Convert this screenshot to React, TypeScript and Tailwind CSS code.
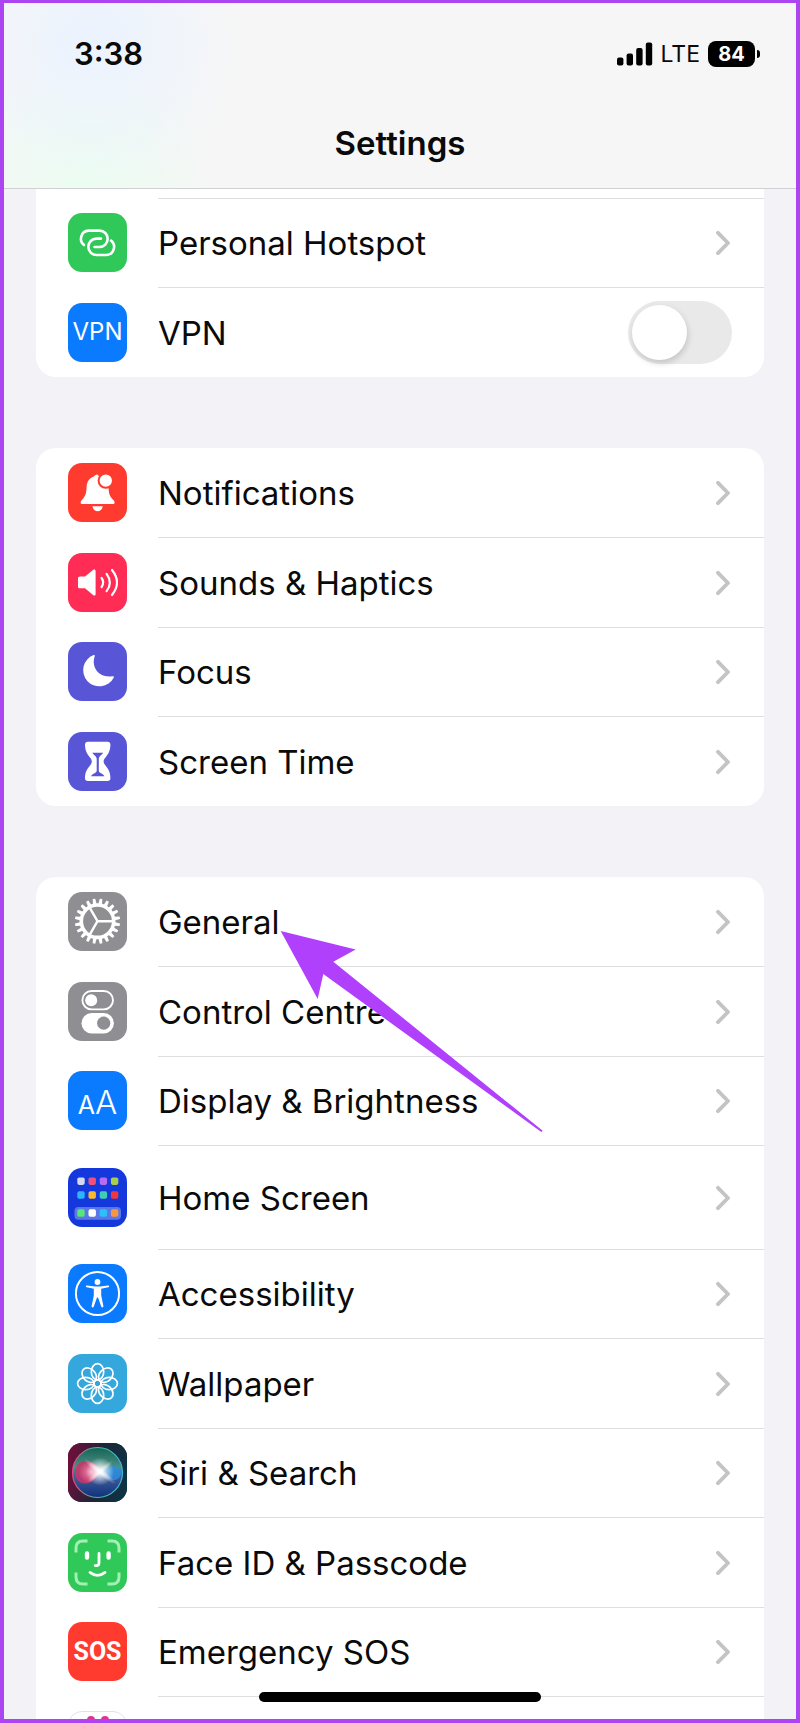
import React from "react";

const iconBox = "h-[59px] w-[59px] shrink-0 rounded-[14px] overflow-hidden flex items-center justify-center text-white";

const HotspotIcon = () => (
  <svg viewBox="0 0 59 59" className="h-full w-full" fill="none" stroke="currentColor" strokeWidth="2.6" strokeLinecap="round">
    <path d="M16 32 A8.1 8.1 0 0 1 20.5 17.6 H31.5 A8.2 8.2 0 0 1 31.5 34 H26.5" />
    <path d="M43 27.6 A8.1 8.1 0 0 1 38.5 42 H28.5 A8.2 8.2 0 0 1 28.5 25.6 H33" />
  </svg>
);

const BellIcon = () => (
  <svg viewBox="0 0 59 59" className="h-full w-full" fill="currentColor">
    <path d="M29.5 11.5 C27.5 11.5 26.5 12.5 26 13.5 C20.5 15.5 18.8 19.5 18.6 24 C18.4 30 17.5 33 14.5 36.2 C13 37.8 12.6 38.7 12.6 39.5 C12.6 40.6 13.4 41 14.6 41 H44.6 C45.8 41 46.6 40.6 46.6 39.5 C46.6 38.7 46.2 37.8 44.6 36.2 C41.5 33 40.8 30 40.6 25 Z" />
    <path d="M24.5 43.3 H34.7 C34.4 46.3 32.4 48.2 29.6 48.2 C26.8 48.2 24.8 46.3 24.5 43.3 Z" />
    <circle cx="37.8" cy="17.6" r="7.2" fill="currentColor" stroke="#ff3b30" strokeWidth="2" />
  </svg>
);

const SpeakerIcon = () => (
  <svg viewBox="0 0 59 59" className="h-full w-full" fill="none" stroke="currentColor" strokeWidth="2.2" strokeLinecap="round">
    <path d="M12 23.5 H17 L25 17 C26.4 16 27.6 16.6 27.6 18.2 V41 C27.6 42.6 26.4 43 25 42 L17 35.3 H12 C10.7 35.3 10 34.6 10 33.4 V25.4 C10 24.2 10.7 23.5 12 23.5 Z" fill="currentColor" stroke="none" />
    <path d="M33.6 25 Q36.8 29.5 33.6 34" />
    <path d="M38.6 20.8 Q45 29.5 38.6 38.2" />
    <path d="M44 17 Q54 29.5 44 42" />
  </svg>
);

const MoonIcon = () => (
  <svg viewBox="0 0 59 59" className="h-full w-full" fill="currentColor">
    <path d="M25.6 13 C26.3 12.7 27 13.2 26.7 14.2 C23 25 30.5 36 44.2 34.2 C45.6 34 46.2 34.6 45.7 35.7 A16.2 16.2 0 1 1 25.6 13 Z" />
  </svg>
);

const HourglassIcon = () => (
  <svg viewBox="0 0 59 59" className="h-full w-full">
    <path d="M20 9.8 H39.5 C41.5 9.8 42.4 11 42.4 12.6 C42.4 19 40 22.5 37.5 25.5 C35 28.4 35 30.6 37.5 33.5 C40 36.5 42.4 40 42.4 46.2 C42.4 48 41.5 49 39.5 49 H20 C18 49 17 48 17 46.2 C17 40 19.4 36.5 22 33.5 C24.4 30.6 24.4 28.4 22 25.5 C19.4 22.5 17 19 17 12.6 C17 11 18 9.8 20 9.8 Z" fill="currentColor" />
    <path d="M24.3 20.8 H35.2 C34.4 22.6 31.4 23.6 30.8 26.5 V39 C31.3 41.6 35.5 41.6 36.5 44.3 H23 C24 41.6 28.2 41.6 28.7 39 V26.5 C28 23.6 25 22.6 24.3 20.8 Z" fill="#5856d6" />
  </svg>
);

const teeth = Array.from({ length: 20 }, (_, i) => i * 18);

const GearIcon = () => (
  <svg viewBox="0 0 59 59" className="h-full w-full" fill="none" stroke="currentColor">
    <circle cx="29.5" cy="29.2" r="16.2" strokeWidth="3.6" />
    {teeth.map((angle) => (
      <path key={angle} d="M27.6 12.4 L28.2 6.6 H30.8 L31.4 12.4 Z" fill="currentColor" stroke="none" transform={`rotate(${angle + 9} 29.5 29.2)`} />
    ))}
    <path d="M29.5 29.2 H46 M29.5 29.2 L21.2 14.8 M29.5 29.2 L21.2 43.6" strokeWidth="2.4" />
  </svg>
);

const TogglesIcon = () => (
  <svg viewBox="0 0 59 59" className="h-full w-full">
    <rect x="14.4" y="9" width="30.6" height="18.4" rx="9.2" fill="none" stroke="currentColor" strokeWidth="1.9" />
    <circle cx="23.2" cy="18.2" r="6" fill="currentColor" />
    <rect x="13.5" y="31" width="32.4" height="20.4" rx="10.2" fill="currentColor" />
    <circle cx="35.7" cy="41.2" r="6.6" fill="#8e8e93" />
  </svg>
);

const appTiles = [
  { y: 9.5, colors: ["#d3d9ee", "#f0507a", "#b46cf5", "#a8cf4a"] },
  { y: 23.3, colors: ["#2cb5fb", "#f8b92c", "#3fcbb4", "#f0383c"] },
  { y: 41.3, colors: ["#54e878", "#ffffff", "#2cc0fb", "#fa9640"] },
];

const HomeScreenIcon = () => (
  <svg viewBox="0 0 59 59" className="h-full w-full">
    <rect x="6.5" y="39" width="46.5" height="12.8" rx="4" fill="#5b76e6" />
    {appTiles.map((row) =>
      row.colors.map((color, i) => (
        <rect key={color} x={9.3 + i * 11.2} y={row.y} width="7.4" height="7.4" rx="1.8" fill={color} />
      ))
    )}
  </svg>
);

const AccessibilityIcon = () => (
  <svg viewBox="0 0 59 59" className="h-full w-full">
    <circle cx="29.5" cy="29.5" r="21.6" fill="none" stroke="currentColor" strokeWidth="2" />
    <circle cx="29.5" cy="18" r="2.9" fill="currentColor" />
    <path d="M19 21.4 L27 22.6 H32 L40 21.4 C41.4 21.2 41.6 23 40.2 23.3 L33.2 24.8 V31.5 L35.4 42 C35.6 43.6 33.7 44 33.2 42.6 L30 33.4 H29 L25.8 42.6 C25.3 44 23.4 43.6 23.6 42 L25.8 31.5 V24.8 L18.8 23.3 C17.4 23 17.6 21.2 19 21.4 Z" fill="currentColor" />
  </svg>
);

const petals = [0, 45, 90, 135, 180, 225, 270, 315];

const FlowerIcon = () => (
  <svg viewBox="0 0 59 59" className="h-full w-full" fill="none" stroke="currentColor" strokeWidth="1.7">
    {petals.map((angle) => (
      <ellipse key={angle} cx="29.5" cy="17.8" rx="6.2" ry="8.2" transform={`rotate(${angle} 29.5 29.5)`} />
    ))}
    <circle cx="29.5" cy="29.5" r="3.5" />
  </svg>
);

const SiriIcon = () => (
  <svg viewBox="0 0 59 59" className="h-full w-full">
    <defs>
      <linearGradient id="siri-bg" x1="0" y1="0.4" x2="1" y2="0.6">
        <stop offset="0" stopColor="#6e0f3a" />
        <stop offset="0.5" stopColor="#1f2438" />
        <stop offset="1" stopColor="#0c3442" />
      </linearGradient>
      <linearGradient id="siri-orb" x1="0" y1="0" x2="0" y2="1">
        <stop offset="0" stopColor="#146454" />
        <stop offset="0.4" stopColor="#4c9088" />
        <stop offset="0.6" stopColor="#3c5c98" />
        <stop offset="1" stopColor="#10307c" />
      </linearGradient>
      <linearGradient id="siri-ring" x1="0" y1="0.5" x2="1" y2="0.5">
        <stop offset="0" stopColor="#f0427c" />
        <stop offset="0.5" stopColor="#3fc09c" />
        <stop offset="1" stopColor="#3fb4e0" />
      </linearGradient>
      <radialGradient id="siri-pink" cx="0.65">
        <stop offset="0" stopColor="#f890b0" />
        <stop offset="1" stopColor="#cc3468" stopOpacity="0.85" />
      </radialGradient>
      <radialGradient id="siri-glow">
        <stop offset="0" stopColor="#ffffff" />
        <stop offset="0.25" stopColor="#ffffff" stopOpacity="0.8" />
        <stop offset="1" stopColor="#ffffff" stopOpacity="0" />
      </radialGradient>
    </defs>
    <rect width="59" height="59" fill="url(#siri-bg)" />
    <circle cx="29.5" cy="29.5" r="25" fill="url(#siri-orb)" stroke="url(#siri-ring)" strokeWidth="1.2" />
    <path d="M32 29 C28 20 22 17 16 18 C9 19.5 6.5 25 7 30 C7.5 37 12 41 18 40.5 C25 40 28 34 32 29 Z" fill="url(#siri-pink)" />
    <path d="M32 29 C37 27 40 23 46 23 C51 23 53.5 27 53 30.5 C52.5 35 49 37.5 45 37 C40 36.5 38 31 32 29 Z" fill="#2c8ce0" fillOpacity="0.85" />
    <circle cx="32" cy="28.5" r="14" fill="url(#siri-glow)" />
    <ellipse cx="32" cy="28.5" rx="20" ry="3.5" transform="rotate(38 32 28.5)" fill="url(#siri-glow)" fillOpacity="0.8" />
    <ellipse cx="32" cy="28.5" rx="17" ry="3" transform="rotate(-40 32 28.5)" fill="url(#siri-glow)" fillOpacity="0.6" />
  </svg>
);

const FaceIcon = () => (
  <svg viewBox="0 0 59 59" className="h-full w-full" fill="none" stroke="currentColor" strokeWidth="3" strokeLinecap="round">
    <g stroke="#a2f0b4" strokeLinecap="butt">
      <path d="M8 19.5 V15 Q8 8 15 8 H19.5" />
      <path d="M39.5 8 H44 Q51 8 51 15 V19.5" />
      <path d="M51 39.5 V44 Q51 51 44 51 H39.5" />
      <path d="M19.5 51 H15 Q8 51 8 44 V39.5" />
    </g>
    <path d="M19 20.5 V24.5 M40.6 20.5 V24.5" strokeWidth="4.4" />
    <path d="M31 20.5 V30 Q31 32.6 28.2 32.6 H27.2" strokeWidth="2.8" />
    <path d="M22 39.4 Q29.5 45.4 37 39.4" strokeWidth="2.8" />
  </svg>
);

const VpnIcon = () => <span className="text-[24px]">VPN</span>;

const TextSizeIcon = () => (
  <span className="flex items-baseline pt-1">
    <span className="text-[25px]">A</span>
    <span className="text-[33px] font-light">A</span>
  </span>
);

const SosIcon = () => <span className="font-[Roboto,sans-serif] text-[25px] font-bold">SOS</span>;

const connectionItems = [
  { label: "Personal Hotspot", bg: "bg-[#30c859]", icon: <HotspotIcon /> },
  { label: "VPN", bg: "bg-[#0a7aff]", icon: <VpnIcon />, toggle: true },
];

const alertItems = [
  { label: "Notifications", bg: "bg-[#ff3b30]", icon: <BellIcon /> },
  { label: "Sounds & Haptics", bg: "bg-[#ff2d55]", icon: <SpeakerIcon /> },
  { label: "Focus", bg: "bg-[#5856d6]", icon: <MoonIcon /> },
  { label: "Screen Time", bg: "bg-[#5856d6]", icon: <HourglassIcon /> },
];

const generalItems = [
  { label: "General", bg: "bg-[#8e8e93]", icon: <GearIcon /> },
  { label: "Control Centre", bg: "bg-[#8e8e93]", icon: <TogglesIcon /> },
  { label: "Display & Brightness", bg: "bg-[#0a7aff]", icon: <TextSizeIcon /> },
  { label: "Home Screen", bg: "bg-[#1438dc]", icon: <HomeScreenIcon />, tall: true },
  { label: "Accessibility", bg: "bg-[#0a7aff]", icon: <AccessibilityIcon /> },
  { label: "Wallpaper", bg: "bg-[#34a8dc]", icon: <FlowerIcon /> },
  { label: "Siri & Search", bg: "bg-[#1f2438]", icon: <SiriIcon /> },
  { label: "Face ID & Passcode", bg: "bg-[#30c859]", icon: <FaceIcon /> },
  { label: "Emergency SOS", bg: "bg-[#ff3b30]", icon: <SosIcon /> },
];

type Item = {
  label: string;
  bg: string;
  icon: React.ReactNode;
  toggle?: boolean;
  tall?: boolean;
};

const Chevron = () => (
  <svg viewBox="0 0 16 26" className="h-[26px] w-4 shrink-0" fill="none" stroke="#c4c4c6" strokeWidth="3.8" strokeLinecap="round" strokeLinejoin="round">
    <path d="M2 2.8 L12 13 L2 23.2" />
  </svg>
);

function Row({ item, divided }: { item: Item; divided: boolean }) {
  const line = divided ? "border-t border-[#dedee0]" : "";
  const body = `flex h-full min-w-0 flex-1 items-center justify-between pr-8 ${line}`;

  return (
    <li className={item.tall ? "h-[104px]" : "odd:h-[89px] even:h-[90px]"}>
      {item.toggle ? (
        <label className="flex h-full items-center gap-[31px] pl-8">
          <span className={`${iconBox} ${item.bg}`}>{item.icon}</span>
          <span className={body}>
            <span className="pt-[2px]">{item.label}</span>
            <input
              type="checkbox"
              role="switch"
              className="relative h-[63px] w-[104px] appearance-none rounded-full bg-[#e9e9ea] before:absolute before:left-1 before:top-1 before:h-[55px] before:w-[55px] before:rounded-full before:bg-white before:shadow-[1px_3px_6px_rgba(0,0,0,0.16)] checked:bg-[#30c859] checked:before:left-[45px]"
            />
          </span>
        </label>
      ) : (
        <a href="#" className="flex h-full items-center gap-[31px] pl-8">
          <span className={`${iconBox} ${item.bg}`}>{item.icon}</span>
          <span className={body}>
            <span className="pt-[2px]">{item.label}</span>
            <Chevron />
          </span>
        </a>
      )}
    </li>
  );
}

export default function App() {
  return (
    <div className="relative w-full overflow-hidden border-x-4 border-t-[3px] border-b-4 border-[#ad44f2] bg-[#f2f2f7] font-[Inter,sans-serif] text-[33px] text-[#0a0a0a]">
      {/* Status bar and title */}
      <header className="border-b border-[#d0d1d3] bg-[#f6f6f6] bg-[radial-gradient(circle_at_90px_40px,#ebf3ff_0,transparent_150px),radial-gradient(circle_at_80px_180px,#ebfdf0_0,transparent_130px)]">
        <div className="flex h-[102px] items-center justify-between pr-[36px] pl-[70px]">
          <span className="text-[31px] font-semibold">3:38</span>
          <div className="flex items-center gap-2">
            <svg viewBox="0 0 36 24" className="h-6 w-9" fill="#000">
              <rect x="0" y="15.5" width="6.4" height="8" rx="2" />
              <rect x="9.6" y="11.5" width="6.4" height="12" rx="2" />
              <rect x="19.2" y="6" width="6.4" height="17.5" rx="2" />
              <rect x="28.8" y="0.5" width="6.4" height="23" rx="2" />
            </svg>
            <span className="text-[23px]">LTE</span>
            <span className="flex items-center gap-[2px]">
              <span className="flex h-[26px] w-[47px] items-center justify-center rounded-lg bg-black text-xl font-bold text-white">84</span>
              <span className="h-2 w-[3px] rounded-r-full bg-black" />
            </span>
          </div>
        </div>
        <h1 className="flex h-[83px] items-center justify-center pb-[5px] font-semibold">Settings</h1>
      </header>

      <main className="flex flex-col gap-[71px] px-8">
        <section className="rounded-b-[20px] bg-white pt-[9px]">
          <ul>
            {connectionItems.map((item) => (
              <Row key={item.label} item={item} divided />
            ))}
          </ul>
        </section>

        <section className="rounded-[20px] bg-white">
          <ul>
            {alertItems.map((item, index) => (
              <Row key={item.label} item={item} divided={index > 0} />
            ))}
          </ul>
        </section>

        <section className="relative rounded-t-[20px] bg-white">
          <ul>
            {generalItems.map((item, index) => (
              <Row key={item.label} item={item} divided={index > 0} />
            ))}
          </ul>

          {/* Next row, cut off by the bottom edge */}
          <div className="flex h-[23px] gap-[31px] overflow-hidden pl-8">
            <div className="mt-[15px] flex h-[59px] w-[59px] justify-center gap-[6px] rounded-[14px] border border-[#e2e2e6] pt-1">
              <span className="h-2 w-2 rounded-full bg-[#e0309a]" />
              <span className="h-2 w-2 rounded-full bg-[#e0309a]" />
            </div>
            <div className="flex-1 border-t border-[#dedee0]" />
          </div>

          {/* Pointer to General */}
          <svg viewBox="0 0 264 204" className="pointer-events-none absolute top-[53px] left-[244px] h-[204px] w-[264px]" fill="#b040fc">
            <path d="M0.7 1 L75.7 19.4 L53.3 31.7 L262.7 200.8 L261.3 202 L43.3 44 L37.7 69 Z" />
          </svg>
        </section>
      </main>

      {/* Home indicator */}
      <div className="absolute bottom-[17px] left-1/2 h-[10px] w-[282px] -translate-x-1/2 rounded-full bg-black" />
    </div>
  );
}
